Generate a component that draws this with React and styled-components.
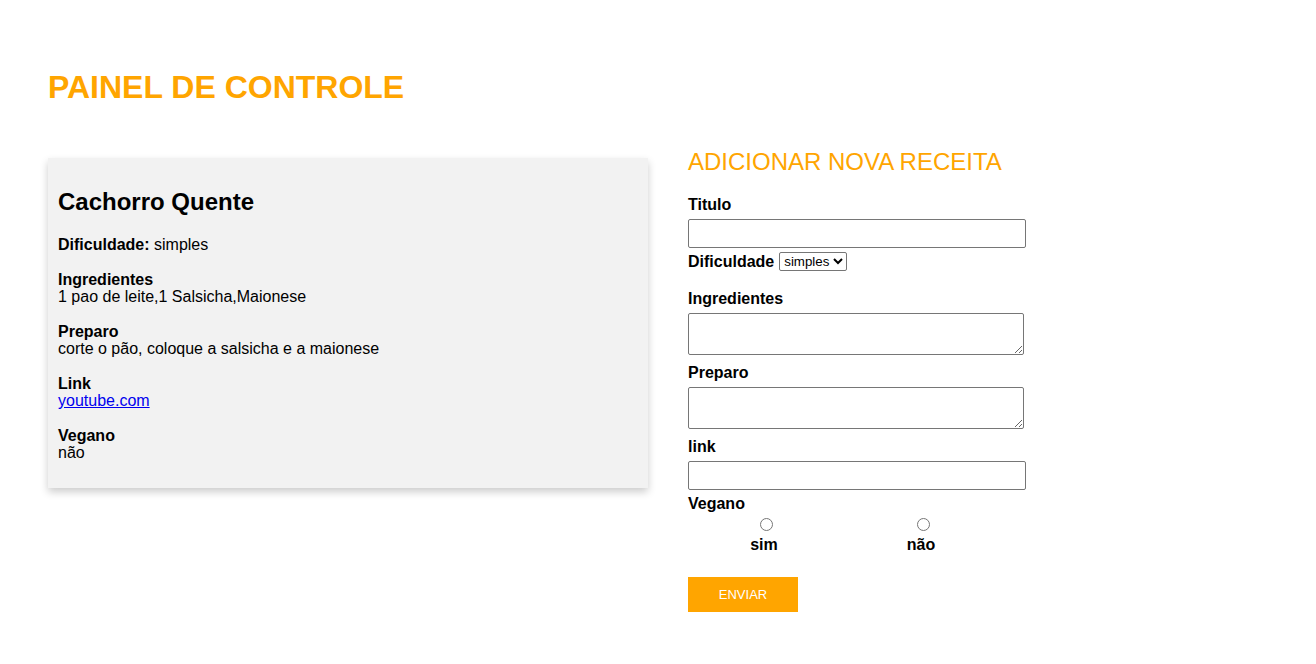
import React from "react";
import styled, { createGlobalStyle } from "styled-components";

const GlobalStyle = createGlobalStyle`
  body {
    margin: 0;
    background: #fff;
    font-family: "Liberation Sans", Arial, sans-serif;
    color: #000;
  }
`;

const Page = styled.div`
  padding: 0 48px;
`;

const Title = styled.h1`
  margin: 69px 0 0;
  font-size: 32px;
  line-height: 37px;
  font-weight: 700;
  color: #ffa500;
`;

const Columns = styled.div`
  display: flex;
  align-items: flex-start;
  gap: 40px;
  margin-top: 42px;
`;

const Card = styled.div`
  box-sizing: border-box;
  width: 600px;
  margin-top: 10px;
  padding: 10px;
  background: #f2f2f2;
  box-shadow: 0 4px 8px 0 rgba(0, 0, 0, 0.2);
`;

const CardTitle = styled.h2`
  margin: 20px 0 20px;
  font-size: 24px;
  line-height: 28px;
  font-weight: 700;
`;

const Info = styled.p`
  margin: 18px 0;
  font-size: 16px;
  line-height: 17px;

  &:last-child {
    margin-bottom: 17px;
  }
`;

const InfoLabel = styled.strong`
  display: ${(p) => (p.$inline ? "inline" : "block")};
`;

const Link = styled.a`
  color: #0000ee;
  text-decoration: underline;
`;

const Form = styled.form`
  display: flex;
  flex-direction: column;
  align-items: flex-start;
`;

const FormTitle = styled.h2`
  margin: 0 0 20px;
  font-size: 24px;
  line-height: 28px;
  font-weight: 400;
  color: #ffa500;
`;

const Label = styled.label`
  display: block;
  font-size: 16px;
  line-height: 18px;
  font-weight: 700;
  margin-top: ${(p) => p.$top || 0}px;
`;

const TextInput = styled.input`
  box-sizing: border-box;
  width: 338px;
  height: 29px;
  margin: 5px 0 0;
  border: 1px solid #767676;
  border-radius: 2px;
  padding: 1px 2px;
`;

const TextArea = styled.textarea`
  box-sizing: border-box;
  width: 336px;
  height: 42px;
  margin: 5px 0 0;
  border: 1px solid #767676;
  border-radius: 2px;
`;

const InlineRow = styled.div`
  display: flex;
  align-items: center;
  gap: 5px;
  margin-top: 4px;
`;

const Select = styled.select`
  font-family: "Liberation Sans", Arial, sans-serif;
  font-size: 13.33px;
  height: 19px;
  padding: 0;
  border: 1px solid #767676;
  border-radius: 2px;
  background: #fff;
`;

const RadioGroup = styled.div`
  display: grid;
  grid-template-columns: 152px 152px;
  column-gap: 5px;
  justify-items: center;
  margin-top: 5px;
`;

const RadioOption = styled.div`
  display: flex;
  flex-direction: column;
  align-items: center;
`;

const Radio = styled.input`
  margin: 0 0 0 6px;
  width: 13px;
  height: 13px;
`;

const RadioText = styled.span`
  font-size: 16px;
  line-height: 18px;
  font-weight: 700;
  margin-top: 5px;
`;

const Button = styled.button`
  margin-top: 23px;
  width: 110px;
  height: 35px;
  border: none;
  background: #ffa500;
  color: #fff;
  font-family: "Liberation Sans", Arial, sans-serif;
  font-size: 13px;
  cursor: pointer;
`;

export default function App() {
  return (
    <Page>
      <GlobalStyle />
      <Title>PAINEL DE CONTROLE</Title>
      <Columns>
        <Card>
          <CardTitle>Cachorro Quente</CardTitle>
          <Info>
            <InfoLabel $inline>Dificuldade:</InfoLabel> simples
          </Info>
          <Info>
            <InfoLabel>Ingredientes</InfoLabel>
            1 pao de leite,1 Salsicha,Maionese
          </Info>
          <Info>
            <InfoLabel>Preparo</InfoLabel>
            corte o pão, coloque a salsicha e a maionese
          </Info>
          <Info>
            <InfoLabel>Link</InfoLabel>
            <Link href="#">youtube.com</Link>
          </Info>
          <Info>
            <InfoLabel>Vegano</InfoLabel>
            não
          </Info>
        </Card>

        <Form onSubmit={(e) => e.preventDefault()}>
          <FormTitle>ADICIONAR NOVA RECEITA</FormTitle>
          <Label>Titulo</Label>
          <TextInput type="text" />
          <InlineRow>
            <Label>Dificuldade</Label>
            <Select defaultValue="simples">
              <option value="simples">simples</option>
              <option value="medio">médio</option>
              <option value="dificil">difícil</option>
            </Select>
          </InlineRow>
          <Label $top={19}>Ingredientes</Label>
          <TextArea />
          <Label $top={9}>Preparo</Label>
          <TextArea />
          <Label $top={9}>link</Label>
          <TextInput type="text" />
          <Label $top={5}>Vegano</Label>
          <RadioGroup>
            <RadioOption>
              <Radio type="radio" name="vegano" value="sim" />
              <RadioText>sim</RadioText>
            </RadioOption>
            <RadioOption>
              <Radio type="radio" name="vegano" value="nao" />
              <RadioText>não</RadioText>
            </RadioOption>
          </RadioGroup>
          <Button type="submit">ENVIAR</Button>
        </Form>
      </Columns>
    </Page>
  );
}
